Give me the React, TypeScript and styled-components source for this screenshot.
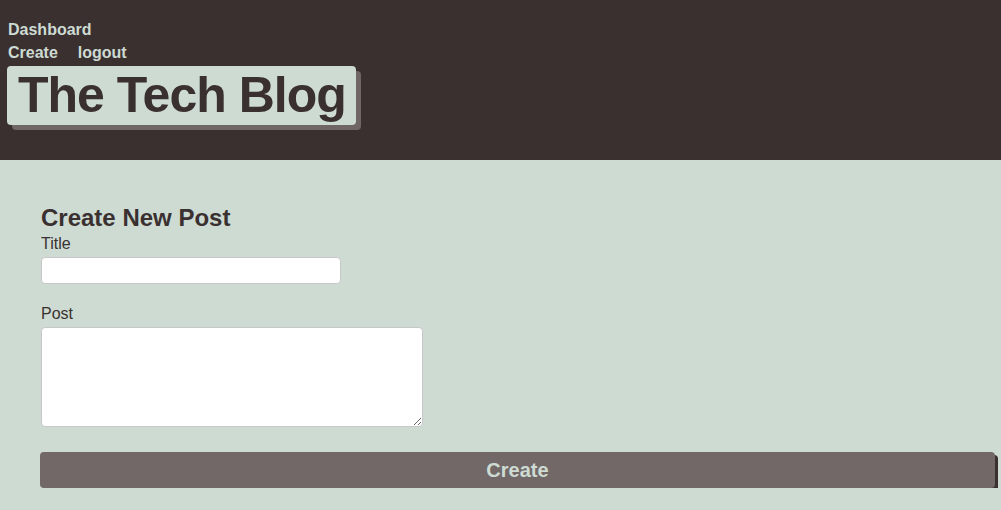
import React from "react";
import styled, { createGlobalStyle } from "styled-components";

const Global = createGlobalStyle`
  html, body { margin: 0; padding: 0; background: #cddbd3; }
  body { font-family: "Liberation Sans", Arial, sans-serif; }
`;

const Header = styled.header`
  background: #3a3030;
  height: 160px;
  box-sizing: border-box;
  padding: 20px 0 0 7px;
`;

const Nav = styled.nav`
  display: flex;
  flex-direction: column;
  padding-left: 1px;
`;

const NavRow = styled.div`
  display: flex;
  gap: 20px;
  height: 23px;
  line-height: 20px;
`;

const NavLink = styled.a`
  color: #cddbd3;
  font-weight: bold;
  font-size: 16px;
  text-decoration: none;
`;

const TitleBox = styled.h1`
  display: inline-block;
  margin: 0;
  background: #cddbd3;
  color: #3a3030;
  font-size: 50px;
  font-weight: bold;
  line-height: 59px;
  height: 59px;
  padding: 0 10px 0 11px;
  border-radius: 4px;
  box-shadow: 5px 5px 0 #6f6665;
  letter-spacing: -1px;
`;

const Main = styled.main`
  padding: 44px 6px 0 40px;
`;

const Form = styled.form`
  display: flex;
  flex-direction: column;
`;

const Heading = styled.h2`
  margin: 0 0 3px 1px;
  font-size: 24px;
  line-height: 28px;
  font-weight: bold;
  color: #3a3030;
`;

const Label = styled.label`
  font-size: 16px;
  line-height: 18px;
  color: #3a3030;
  margin-left: 1px;
  margin-bottom: 4px;
`;

const TextInput = styled.input`
  box-sizing: border-box;
  width: 300px;
  height: 27px;
  margin: 0 0 21px 1px;
  border: 1px solid #c8c8c8;
  border-radius: 4px;
  background: #fff;
`;

const TextArea = styled.textarea`
  box-sizing: border-box;
  width: 382px;
  height: 100px;
  margin: 0 0 25px 1px;
  border: 1px solid #c8c8c8;
  border-radius: 4px;
  background: #fff;
  display: block;
`;

const Button = styled.button`
  box-sizing: border-box;
  width: 100%;
  height: 36px;
  background: #716867;
  color: #cddbd3;
  border: none;
  border-radius: 4px;
  box-shadow: 3px 3px 0 #3a3030;
  font-family: "Liberation Sans", Arial, sans-serif;
  font-size: 20px;
  font-weight: bold;
`;

export default function App() {
  return (
    <>
      <Global />
      <Header>
        <Nav>
          <NavRow>
            <NavLink href="#">Dashboard</NavLink>
          </NavRow>
          <NavRow>
            <NavLink href="#">Create</NavLink>
            <NavLink href="#">logout</NavLink>
          </NavRow>
        </Nav>
        <TitleBox>The Tech Blog</TitleBox>
      </Header>
      <Main>
        <Form>
          <Heading>Create New Post</Heading>
          <Label>Title</Label>
          <TextInput type="text" />
          <Label>Post</Label>
          <TextArea />
          <Button type="button">Create</Button>
        </Form>
      </Main>
    </>
  );
}
